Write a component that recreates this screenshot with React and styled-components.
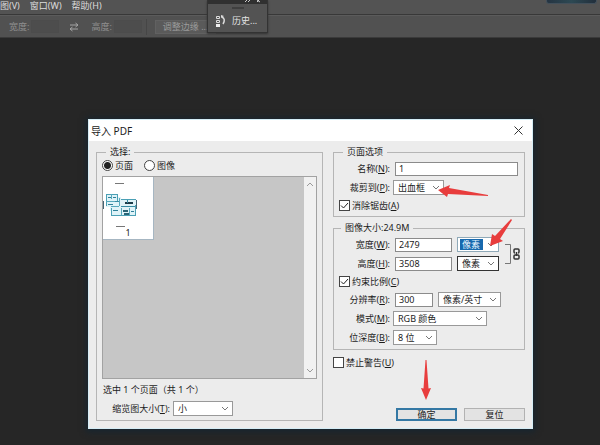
import React, { useState } from "react";
import styled, { createGlobalStyle, css } from "styled-components";

const GlobalStyle = createGlobalStyle`
  * { box-sizing: border-box; }
  body { margin: 0; background: #262626; }
  body, button, input, select {
    font-family: "Noto Sans", "Noto Sans CJK SC", sans-serif;
    font-size: 9px;
    line-height: 14px;
  }
`;

/* ---------- application chrome ---------- */

const Page = styled.div`
  position: relative;
  display: flex;
  flex-direction: column;
  min-height: 100vh;
  background: #262626;
  overflow: hidden;
`;

const MenuBar = styled.nav`
  display: flex;
  gap: 10px;
  height: 15px;
  background: #535353;
  border-bottom: 1px solid #383838;
`;

const MenuItem = styled.button`
  height: 10px;
  padding: 0;
  border: 0;
  background: none;
  color: #dcdcdc;
  line-height: 9px;
  white-space: nowrap;
`;

const OptionsBar = styled.div`
  display: flex;
  align-items: center;
  height: 23px;
  padding-left: 9px;
  background: #515151;
  border-top: 1px solid #5b5b5b;
  border-bottom: 1px solid #3a3a3a;
  color: #8f8f8f;
`;

const OptionLabel = styled.label`
  display: flex;
  align-items: center;
  gap: 2px;
  white-space: nowrap;
`;

const OptionInput = styled.input`
  width: 28px;
  height: 13px;
  padding: 0 2px;
  border: 1px solid #4c4c4c;
  background: #4d4d4d;
  color: #8f8f8f;
`;

const SwapIcon = styled.svg`
  width: 10px;
  height: 10px;
  margin: 0 12px 0 10px;
`;

const RefineButton = styled.button`
  height: 14px;
  margin-left: 8px;
  padding: 0 7px;
  border: 1px solid #616161;
  background: #5a5a5a;
  color: #9a9a9a;
  line-height: 12px;
  white-space: nowrap;
`;

const Divider = styled.span`
  width: 1px;
  height: 16px;
  margin-left: 4px;
  background: #464646;
`;

const HistoryPanel = styled.aside`
  position: absolute;
  top: 0;
  left: 207px;
  width: 61px;
  border: 1px solid #333;
  border-top: 0;
  background: #535353;
  box-shadow: 0 1px 2px #333;
`;

const PanelBar = styled.div`
  display: flex;
  justify-content: flex-end;
  height: 4px;
  padding-right: 3px;
  background: #303030;
`;

const PanelGrip = styled.div`
  width: 12px;
  height: 2px;
  margin: 3px auto 4px;
  background: #3f3f3f;
`;

const PanelButton = styled.button`
  display: flex;
  align-items: center;
  gap: 6px;
  width: 100%;
  height: 19px;
  padding: 0 0 4px 7px;
  border: 0;
  background: none;
  color: #e4e4e4;
  white-space: nowrap;
`;

const CornerWidget = styled.div`
  position: absolute;
  top: 0;
  right: 3px;
  width: 51px;
  height: 4px;
  border: 1px solid #43505b;
  border-top: 0;
  border-radius: 0 0 3px 3px;
  background: linear-gradient(90deg, #253442, #2d4953 50%, #222f3c);
`;

/* ---------- dialog ---------- */

const Workspace = styled.main`
  flex: 1;
  padding: 81px 67px 15px 88px;
`;

const Dialog = styled.section`
  border: 1px solid #d5edf6;
  background: #ececec;
  color: #1c1c1c;
  box-shadow: 0 1px 6px 2px #172630;
`;

const TitleBar = styled.header`
  display: flex;
  align-items: center;
  justify-content: space-between;
  height: 21px;
  padding: 0 9px 0 2px;
  background: #fff;
`;

const Title = styled.h1`
  margin: 0;
  font-size: 10px;
  font-weight: 400;
`;

const CloseButton = styled.button`
  display: flex;
  padding: 0;
  border: 0;
  background: none;
`;

const Body = styled.div`
  display: flex;
  gap: 10px;
  padding: 4px 7px 7px;
`;

const Group = styled.fieldset`
  min-width: 0;
  margin: 0;
  padding: 0 0 4px;
  border: 1px solid #b5b5b5;
`;

const Legend = styled.legend`
  height: 14px;
  margin-left: ${(p) => p.$inset || 9}px;
  padding: 0 4px;
  white-space: nowrap;
`;

const SelectionGroup = styled(Group)`
  flex: 1;
`;

const Choices = styled.div`
  display: flex;
  gap: 11px;
  height: 15px;
  padding-left: 5px;
`;

const ToggleLabel = styled.label`
  display: flex;
  align-items: center;
  gap: 2px;
  height: 13px;
  padding-left: ${(p) => p.$inset || 0}px;
  white-space: nowrap;
`;

const Radio = styled.input`
  appearance: none;
  width: 11px;
  height: 11px;
  margin: 0;
  border: 1px solid #444;
  border-radius: 50%;
  background: #fff;
  &:checked {
    background: radial-gradient(circle, #222 0 3px, #fff 4px);
  }
`;

const Preview = styled.div`
  display: flex;
  justify-content: space-between;
  height: 203px;
  margin: 2px 5px 0;
  border: 1px solid #a2a2a2;
  background: #c6c6c6;
`;

const Thumb = styled.button`
  display: flex;
  flex-direction: column;
  width: 51px;
  height: 63px;
  padding: 0;
  border: 0;
  border-right: 1px solid #a6b6c2;
  border-bottom: 1px solid #a6b6c2;
  background: #fff;
  color: #222;
`;

const ThumbNumber = styled.span`
  width: 100%;
  height: 11px;
  line-height: 9px;
  text-align: center;
`;

const Scrollbar = styled.div`
  display: flex;
  flex-direction: column;
  justify-content: space-between;
  align-items: center;
  width: 12px;
  padding: 4px 0;
  background: #f1f1f1;
`;

const Summary = styled.p`
  margin: 4px 6px;
`;

const Row = styled.div`
  display: flex;
  align-items: center;
  gap: ${(p) => (p.$text ? 5 : 3)}px;
  height: 15px;
`;

const RowLabel = styled.label`
  width: ${(p) => p.$width || 56}px;
  text-align: right;
  white-space: nowrap;
`;

const TextInput = styled.input`
  width: ${(p) => p.$width}px;
  height: 14px;
  padding: 0 3px;
  border: 1px solid #8b8b8b;
  border-radius: 0;
  background: #fff;
  color: #1c1c1c;
  line-height: 12px;
`;

const SelectBox = styled.span`
  position: relative;
  display: flex;
  width: ${(p) => p.$width}px;
`;

const NativeSelect = styled.select`
  appearance: none;
  width: 100%;
  height: 15px;
  padding: 0 14px 0 4px;
  border: 1px solid ${(p) => (p.$dark ? "#333" : "#999")};
  border-radius: 0;
  background: #fff;
  color: #1c1c1c;
  line-height: 12px;
  ${(p) =>
    p.$highlighted &&
    css`
      padding: 1px 15px 1px 2px;
      border-color: #8fa9b8;
      background: #1769ae content-box;
      box-shadow: inset 0 0 0 1px #fff;
      color: #eaf6ff;
      text-indent: 2px;
      line-height: 10px;
    `}
`;

const HighlightBacking = styled.span`
  display: flex;
  width: 100%;
  background: #fff;
`;

const SelectChevron = styled.svg`
  position: absolute;
  top: 5px;
  right: 4px;
  width: 8px;
  height: 6px;
  pointer-events: none;
`;

const Settings = styled.div`
  display: flex;
  flex-direction: column;
  flex: 0 0 192px;
`;

const Fields = styled.div`
  display: flex;
  flex-direction: column;
  gap: 4px;
  padding-top: ${(p) => p.$top || 0}px;
`;

const SizeFields = styled.div`
  display: flex;
  align-items: center;
  gap: 5px;
`;

const SizeGroup = styled(Group)`
  margin-top: 4px;
`;

const CheckInput = styled.input`
  appearance: none;
  width: 11px;
  height: 11px;
  margin: 0;
  border: 1px solid #444;
  background: #fff;
`;

const CheckFrame = styled.span`
  position: relative;
  display: flex;
`;

const CheckMark = styled.svg`
  position: absolute;
  inset: 0;
  width: 11px;
  height: 11px;
  pointer-events: none;
`;

const Warning = styled.div`
  margin-top: 6px;
`;

const Actions = styled.div`
  display: flex;
  justify-content: flex-end;
  gap: 7px;
  margin-top: auto;
`;

const ActionSlot = styled.span`
  position: relative;
  display: flex;
`;

const ActionButton = styled.button`
  width: 61px;
  height: 13px;
  padding: 0;
  border: ${(p) => (p.$primary ? "2px solid #3478a4" : "1px solid #b2b2b2")};
  background: #e3e3e3;
  color: #1c1c1c;
  line-height: 9px;
`;

const Arrow = styled.svg`
  position: absolute;
  z-index: 1;
  left: ${(p) => p.$left}px;
  top: ${(p) => p.$top}px;
  fill: #e83d3d;
  pointer-events: none;
`;

function Chevron({ up }) {
  return (
    <svg width="8" height="6" viewBox="0 0 8 6" fill="none" stroke="#9a9a9a">
      <path d={up ? "M1 5 4 2 7 5" : "M1 1 4 4 7 1"} />
    </svg>
  );
}

function Select({ id, label, options, width, dark, highlighted, children }) {
  const control = (
    <NativeSelect id={id} aria-label={label} $dark={dark} $highlighted={highlighted}>
      {options.map((o) => (
        <option key={o}>{o}</option>
      ))}
    </NativeSelect>
  );
  return (
    <SelectBox $width={width}>
      {highlighted ? <HighlightBacking>{control}</HighlightBacking> : control}
      <SelectChevron viewBox="0 0 8 6" fill="none" stroke="#777">
        <path d="M1 1 4 4 7 1" />
      </SelectChevron>
      {children}
    </SelectBox>
  );
}

function Check({ children, initial = false, inset }) {
  const [on, setOn] = useState(initial);
  return (
    <ToggleLabel $inset={inset}>
      <CheckFrame>
        <CheckInput type="checkbox" checked={on} onChange={() => setOn(!on)} />
        {on && (
          <CheckMark viewBox="0 0 11 11" fill="none" stroke="#222">
            <path d="M2 5.5 4.5 8 9 3" />
          </CheckMark>
        )}
      </CheckFrame>
      <span>{children}</span>
    </ToggleLabel>
  );
}

function FloorPlan() {
  return (
    <svg width="50" height="51" viewBox="0 0 50 51" fill="none">
      <path d="M12 6.5h9M13 49.5h9" stroke="#777" />
      <path d="M.5 24v8M33.5 23v9" stroke="#456575" />
      <path d="M3 17h11v3h4v3h15v5h-1v11H9v-5H7v-4H3z" fill="#dff3f8" />
      <path d="M3.5 17v12M3 17.5h11M14.500 17v7M18 22.500h15M32.500 28v11M9 38.500h23M8.500 31v8" stroke="#4ba0b5" />
      <path d="M8.500 17v5M3 24.500h9M16.500 21v8M18.500 31v7M26.500 31v7M8 29.500h8" stroke="#57a9bd" />
      <path d="M5 20.500h3M10 20.500h3M5 27.500h5M10 33.500h5M28 34.500h3" stroke="#2e7f98" />
      <path d="M22 26h8" stroke="#1b3b48" strokeWidth="2" />
      <path d="M20 34h5M21 37h5" stroke="#2a6476" strokeWidth="2" />
      <path d="M12 24.500h4M18 29.500h14M24.500 23v3" stroke="#378ba3" />
    </svg>
  );
}

function LinkIcon() {
  return (
    <svg width="17" height="22" viewBox="0 0 17 22" fill="none">
      <path d="M1 1.5h5.5v19H1" stroke="#777" />
      <path
        d="M10 9V7q0-1 1-1h3q1 0 1 1v2q0 1-1 1M10 13v2q0 1 1 1h3q1 0 1-1v-2q0-1-1-1h-3q-1 0-1 1M12.5 9v4M10 9q0 1 1 1"
        stroke="#333"
        strokeWidth="1.5"
      />
    </svg>
  );
}

export default function App() {
  const [source, setSource] = useState("page");
  return (
    <Page>
      <GlobalStyle />
      <MenuBar>
        <MenuItem>图(V)</MenuItem>
        <MenuItem>窗口(W)</MenuItem>
        <MenuItem>帮助(H)</MenuItem>
      </MenuBar>
      <OptionsBar>
        <OptionLabel>
          宽度: <OptionInput />
        </OptionLabel>
        <SwapIcon viewBox="0 0 10 10" fill="none" stroke="#a5a5a5">
          <path d="M1 3h8M6.500 1 9 3 6.500 5M9 7H1M3.500 5 1 7l2.500 2" />
        </SwapIcon>
        <OptionLabel>
          高度: <OptionInput />
        </OptionLabel>
        <Divider />
        <RefineButton>调整边缘 ...</RefineButton>
      </OptionsBar>
      <HistoryPanel>
        <PanelBar>
          <svg width="20" height="4" viewBox="0 0 20 4" fill="none" stroke="#ccc">
            <path d="M3 0 1 2M6 0 4 2M13 2l3-3M13 0l3 2" />
          </svg>
        </PanelBar>
        <PanelGrip />
        <PanelButton>
          <svg width="11" height="12" viewBox="0 0 11 12" fill="none" stroke="#ddd">
            <path d="M1.500 1.500h3v2h-3zM1.500 5.500h3v2h-3z" />
            <path d="M1 9h4v3H1z" fill="#eee" stroke="none" />
            <path d="M7 2q4 2 1 7" strokeWidth="1.500" />
            <path d="M6 3V0l3 1z" fill="#ddd" stroke="none" />
          </svg>
          历史...
        </PanelButton>
      </HistoryPanel>
      <CornerWidget />

      <Workspace>
        <Dialog role="dialog" aria-labelledby="dialog-title">
          <TitleBar>
            <Title id="dialog-title">导入 PDF</Title>
            <CloseButton aria-label="关闭">
              <svg width="9" height="9" viewBox="0 0 9 9" stroke="#333">
                <path d="M.5.5l8 8M8.500.5l-8 8" />
              </svg>
            </CloseButton>
          </TitleBar>
          <Body>
            <SelectionGroup>
              <Legend>选择:</Legend>
              <Choices>
                <ToggleLabel>
                  <Radio
                    type="radio"
                    name="source"
                    checked={source === "page"}
                    onChange={() => setSource("page")}
                  />
                  页面
                </ToggleLabel>
                <ToggleLabel>
                  <Radio
                    type="radio"
                    name="source"
                    checked={source === "image"}
                    onChange={() => setSource("image")}
                  />
                  图像
                </ToggleLabel>
              </Choices>
              <Preview>
                <Thumb>
                  <FloorPlan />
                  <ThumbNumber>1</ThumbNumber>
                </Thumb>
                <Scrollbar>
                  <Chevron up />
                  <Chevron />
                </Scrollbar>
              </Preview>
              <Summary>选中 1 个页面（共 1 个）</Summary>
              <Row>
                <RowLabel htmlFor="thumb-size" $width={73}>
                  缩览图大小(<u>T</u>):
                </RowLabel>
                <Select id="thumb-size" width={60} options={["小", "中", "大"]} />
              </Row>
            </SelectionGroup>

            <Settings>
              <Group>
                <Legend>页面选项</Legend>
                <Fields $top={2}>
                  <Row $text>
                    <RowLabel htmlFor="name">
                      名称(<u>N</u>):
                    </RowLabel>
                    <TextInput id="name" $width={123} defaultValue="1" />
                  </Row>
                  <Row>
                    <RowLabel htmlFor="crop">
                      裁剪到(<u>P</u>):
                    </RowLabel>
                    <Select id="crop" width={51} options={["出血框", "裁剪框", "媒体框"]}>
                      <Arrow $left={45} $top={5} width="50" height="12" viewBox="0 0 50 12">
                        <path d="M0 5 12 0 11 3 50 10 50 11 10 9 9 12z" />
                      </Arrow>
                    </Select>
                  </Row>
                  <Check initial inset={5}>
                    消除锯齿(<u>A</u>)
                  </Check>
                </Fields>
              </Group>

              <SizeGroup>
                <Legend $inset={7}>图像大小:24.9M</Legend>
                <Fields $top={2}>
                  <SizeFields>
                    <Fields>
                      <Row $text>
                        <RowLabel htmlFor="width">
                          宽度(<u>W</u>):
                        </RowLabel>
                        <TextInput id="width" $width={57} defaultValue="2479" />
                        <Select
                          label="宽度单位"
                          width={42}
                          highlighted
                          options={["像素", "厘米", "英寸"]}
                        >
                          <Arrow $left={33} $top={-18} width="23" height="27" viewBox="0 0 23 27">
                            <path d="M0 27 2 15 5 17 21 0 22 1 10 20 13 22z" />
                          </Arrow>
                        </Select>
                      </Row>
                      <Row $text>
                        <RowLabel htmlFor="height">
                          高度(<u>H</u>):
                        </RowLabel>
                        <TextInput id="height" $width={57} defaultValue="3508" />
                        <Select
                          label="高度单位"
                          width={42}
                          dark
                          options={["像素", "厘米", "英寸"]}
                        />
                      </Row>
                    </Fields>
                    <LinkIcon />
                  </SizeFields>
                  <Check initial inset={5}>
                    约束比例(<u>C</u>)
                  </Check>
                  <Row $text>
                    <RowLabel htmlFor="resolution">
                      分辨率(<u>R</u>):
                    </RowLabel>
                    <TextInput id="resolution" $width={38} defaultValue="300" />
                    <Select
                      label="分辨率单位"
                      width={63}
                      options={["像素/英寸", "像素/厘米"]}
                    />
                  </Row>
                  <Row>
                    <RowLabel htmlFor="mode">
                      模式(<u>M</u>):
                    </RowLabel>
                    <Select id="mode" width={94} options={["RGB 颜色", "CMYK 颜色", "灰度"]} />
                  </Row>
                  <Row>
                    <RowLabel htmlFor="depth">
                      位深度(<u>B</u>):
                    </RowLabel>
                    <Select id="depth" width={44} options={["8 位", "16 位"]} />
                  </Row>
                </Fields>
              </SizeGroup>

              <Warning>
                <Check>
                  禁止警告(<u>U</u>)
                </Check>
              </Warning>

              <Actions>
                <ActionSlot>
                  <ActionButton $primary>确定</ActionButton>
                  <Arrow $left={24} $top={-48} width="12" height="40" viewBox="0 0 12 40">
                    <path d="M5.500 0h1L8.500 28.500 11 28 6 40 1 28 3.500 28.500z" />
                  </Arrow>
                </ActionSlot>
                <ActionButton>复位</ActionButton>
              </Actions>
            </Settings>
          </Body>
        </Dialog>
      </Workspace>
    </Page>
  );
}
